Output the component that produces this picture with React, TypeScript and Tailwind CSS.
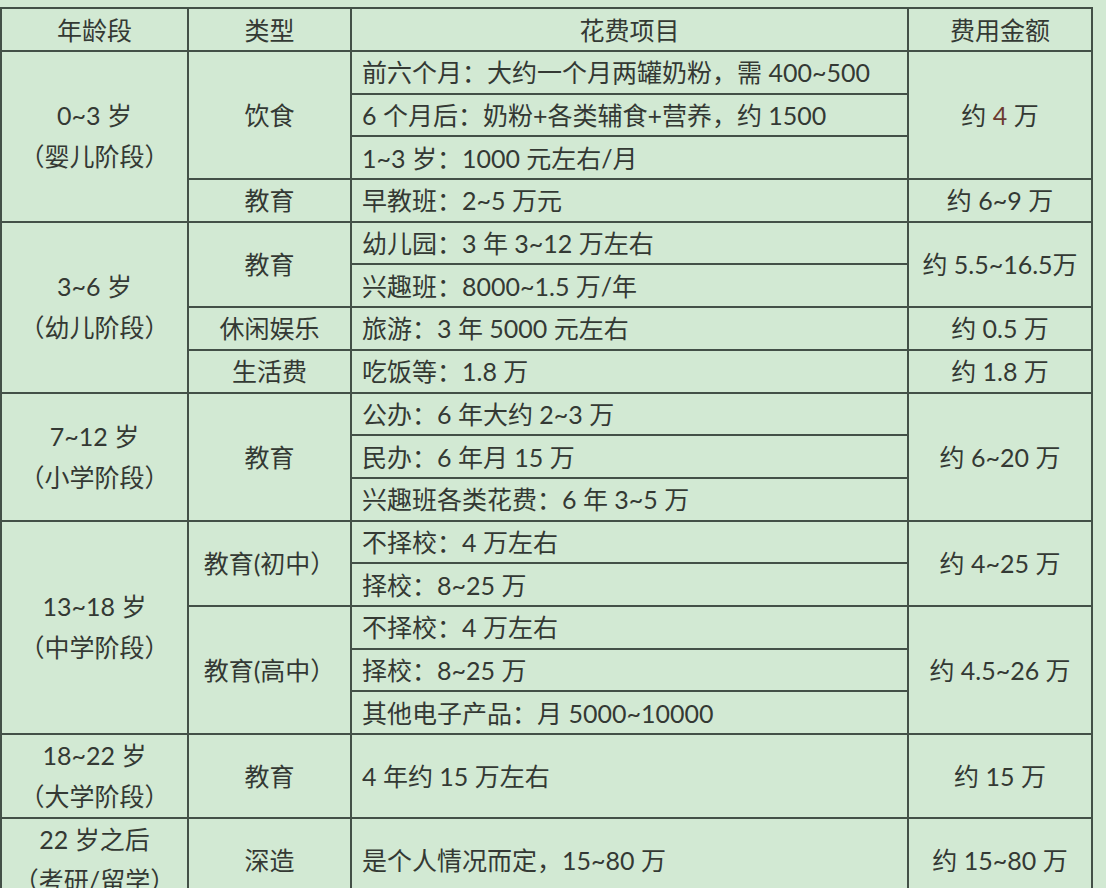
const cell = "border-2 border-[#435047] align-middle p-0";
const center = `${cell} text-center`;
const item = `${cell} text-left pl-[10px] whitespace-nowrap`;
const stage = `${center} leading-[41px]`;

export default function App() {
  const rowH = "h-[42.7px]";
  return (
    <div className="w-full h-[888px] overflow-hidden bg-[#d2e9d3] pt-[7px] font-[Lato,'Noto_Sans_CJK_SC',sans-serif] text-[25px] leading-[30px] text-[#343934]">
      <table className="w-[1091px] table-fixed border-collapse">
        <colgroup>
          <col className="w-[187px]" />
          <col className="w-[163px]" />
          <col className="w-[557px]" />
          <col className="w-[184px]" />
        </colgroup>
        <tbody>
          <tr className="h-[43px]">
            <td className={center}>年龄段</td>
            <td className={center}>类型</td>
            <td className={center}>花费项目</td>
            <td className={center}>费用金额</td>
          </tr>

          {/* 0~3 岁 */}
          <tr className={rowH}>
            <td rowSpan={4} className={stage}>
              0~3 岁<br />（婴儿阶段）
            </td>
            <td rowSpan={3} className={center}>饮食</td>
            <td className={item}>前六个月：大约一个月两罐奶粉，需 400~500</td>
            <td rowSpan={3} className={center}>
              约 <span className="text-[#6b3a30]">4</span> 万
            </td>
          </tr>
          <tr className={rowH}>
            <td className={item}>6 个月后：奶粉+各类辅食+营养，约 1500</td>
          </tr>
          <tr className={rowH}>
            <td className={item}>1~3 岁：1000 元左右/月</td>
          </tr>
          <tr className={rowH}>
            <td className={center}>教育</td>
            <td className={item}>早教班：2~5 万元</td>
            <td className={center}>约 6~9 万</td>
          </tr>

          {/* 3~6 岁 */}
          <tr className={rowH}>
            <td rowSpan={4} className={stage}>
              3~6 岁<br />（幼儿阶段）
            </td>
            <td rowSpan={2} className={center}>教育</td>
            <td className={item}>幼儿园：3 年 3~12 万左右</td>
            <td rowSpan={2} className={center}>约 5.5~16.5万</td>
          </tr>
          <tr className={rowH}>
            <td className={item}>兴趣班：8000~1.5 万/年</td>
          </tr>
          <tr className={rowH}>
            <td className={center}>休闲娱乐</td>
            <td className={item}>旅游：3 年 5000 元左右</td>
            <td className={center}>约 0.5 万</td>
          </tr>
          <tr className={rowH}>
            <td className={center}>生活费</td>
            <td className={item}>吃饭等：1.8 万</td>
            <td className={center}>约 1.8 万</td>
          </tr>

          {/* 7~12 岁 */}
          <tr className={rowH}>
            <td rowSpan={3} className={stage}>
              7~12 岁<br />（小学阶段）
            </td>
            <td rowSpan={3} className={center}>教育</td>
            <td className={item}>公办：6 年大约 2~3 万</td>
            <td rowSpan={3} className={center}>约 6~20 万</td>
          </tr>
          <tr className={rowH}>
            <td className={item}>民办：6 年月 15 万</td>
          </tr>
          <tr className={rowH}>
            <td className={item}>兴趣班各类花费：6 年 3~5 万</td>
          </tr>

          {/* 13~18 岁 */}
          <tr className={rowH}>
            <td rowSpan={5} className={stage}>
              13~18 岁<br />（中学阶段）
            </td>
            <td rowSpan={2} className={center}>教育(初中）</td>
            <td className={item}>不择校：4 万左右</td>
            <td rowSpan={2} className={center}>约 4~25 万</td>
          </tr>
          <tr className={rowH}>
            <td className={item}>择校：8~25 万</td>
          </tr>
          <tr className={rowH}>
            <td rowSpan={3} className={center}>教育(高中）</td>
            <td className={item}>不择校：4 万左右</td>
            <td rowSpan={3} className={center}>约 4.5~26 万</td>
          </tr>
          <tr className={rowH}>
            <td className={item}>择校：8~25 万</td>
          </tr>
          <tr className={rowH}>
            <td className={item}>其他电子产品：月 5000~10000</td>
          </tr>

          {/* 18~22 岁 */}
          <tr className="h-[84px]">
            <td className={stage}>
              18~22 岁<br />（大学阶段）
            </td>
            <td className={center}>教育</td>
            <td className={item}>4 年约 15 万左右</td>
            <td className={center}>约 15 万</td>
          </tr>

          {/* 22 岁之后 */}
          <tr className="h-[84px]">
            <td className={stage}>
              22 岁之后<br />（考研/留学）
            </td>
            <td className={center}>深造</td>
            <td className={item}>是个人情况而定，15~80 万</td>
            <td className={center}>约 15~80 万</td>
          </tr>
        </tbody>
      </table>
    </div>
  );
}
